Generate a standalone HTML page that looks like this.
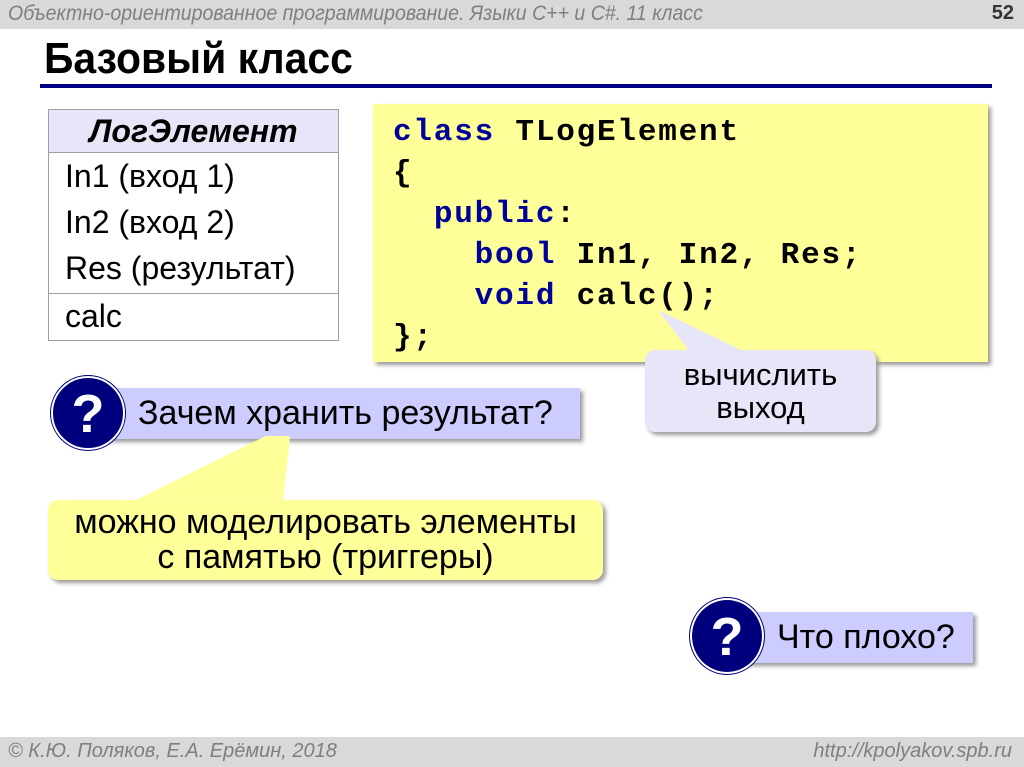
<!DOCTYPE html>
<html><head><meta charset="utf-8"><style>
*{margin:0;padding:0;box-sizing:border-box}
body{width:1024px;height:767px;position:relative;background:#fff;font-family:"Liberation Sans",Arial,sans-serif;overflow:hidden}
.abs{position:absolute}
#top{left:0;top:0;width:1024px;height:29px;background:#d9d9d9}
#top .t{left:8px;top:2px;font-style:italic;font-size:21px;color:#7f7f7f;transform:scaleX(.93);transform-origin:left;white-space:nowrap}
#top .n{right:10px;top:2px;font-weight:bold;font-size:20px;color:#333}
h1{position:absolute;left:44px;top:34px;font-size:44px;font-weight:bold;color:#000;transform:scaleX(.93);transform-origin:left;white-space:nowrap}
#rule{left:40px;top:84px;width:952px;height:4px;background:#000080}
#tbl{left:48px;top:109px;width:291px;height:232px;border:1px solid #a0a0a0}
#tbl .h{height:43px;background:#e6e6f8;border-bottom:1px solid #a0a0a0;text-align:center;font-size:32px;font-weight:bold;font-style:italic;line-height:42px}
#tbl .r{font-size:32px;padding-left:16px;line-height:46px;white-space:nowrap}
#tbl .b{border-top:1px solid #a0a0a0;margin-top:2px}
#code{left:373px;top:104px;width:615px;height:258px;background:#ffff99;box-shadow:3px 3px 4px #9a9a9a}
#code pre{position:absolute;left:20px;top:8px;font-family:"Liberation Mono","Courier New",monospace;font-size:31px;font-weight:bold;line-height:41px;color:#000;letter-spacing:1.8px}
.k{color:#00009a}
.bub{background:#e6e6f8;border-radius:10px;box-shadow:3px 3px 4px #9a9a9a;text-align:center;font-size:31px}
.q{border-radius:50%;background:#00007f;border:2px solid #fff;box-shadow:0 0 0 1px #00007f;color:#fff;font-weight:bold;text-align:center}
.bar{background:#ccccff;box-shadow:3px 3px 4px #9a9a9a;font-size:34px;white-space:nowrap}
#ans{left:48px;top:500px;width:555px;height:80px;background:#ffff99;border-radius:10px;box-shadow:3px 3px 4px #9a9a9a;text-align:center;font-size:34px;line-height:35px;padding-top:5px;white-space:nowrap}
#foot{left:0;top:737px;width:1024px;height:30px;background:#d9d9d9}
#foot .l{left:8px;top:3px;font-style:italic;font-size:20px;color:#7f7f7f}
#foot .r{right:12px;top:3px;font-style:italic;font-size:20px;color:#7f7f7f}
</style></head><body>
<div id="top" class="abs"><div class="abs t">Объектно-ориентированное программирование. Языки C++ и C#. 11 класс</div><div class="abs n">52</div></div>
<h1>Базовый класс</h1>
<div id="rule" class="abs"></div>
<div id="tbl" class="abs">
<div class="h">ЛогЭлемент</div>
<div class="r">In1 (вход 1)</div>
<div class="r">In2 (вход 2)</div>
<div class="r">Res (результат)</div>
<div class="r b" style="line-height:44px">calc</div>
</div>
<div id="code" class="abs"><pre><span class="k">class</span> TLogElement
{
  <span class="k">public</span>:
    <span class="k">bool</span> In1, In2, Res;
    <span class="k">void</span> calc<b>()</b>;
};</pre></div>
<svg class="abs" style="left:0;top:0" width="1024" height="767">
<polygon points="658,310 690,352 745,352" fill="#e6e6f8"/>
</svg>
<div class="abs bub" style="left:645px;top:350px;width:231px;height:82px;line-height:33px;padding-top:8px">вычислить<br>выход</div>
<div class="abs bar" style="left:100px;top:388px;width:480px;height:51px;line-height:51px;padding-left:38px">Зачем хранить результат?</div>
<svg class="abs" style="left:0;top:0" width="1024" height="767"><polygon points="290,436 266,436 130,503 283,503" fill="#ffff99"/></svg>
<div class="abs q" style="left:51px;top:376px;width:74px;height:74px;font-size:54px;line-height:72px">?</div>
<div id="ans" class="abs">можно моделировать элементы<br>с памятью (триггеры)</div>
<div class="abs bar" style="left:740px;top:612px;width:233px;height:51px;line-height:51px;padding-left:37px">Что плохо?</div>
<div class="abs q" style="left:690px;top:598px;width:74px;height:76px;font-size:54px;line-height:74px">?</div>
<div id="foot" class="abs"><div class="abs l">© К.Ю. Поляков, Е.А. Ерёмин, 2018</div><div class="abs r">http://kpolyakov.spb.ru</div></div>
</body></html>
